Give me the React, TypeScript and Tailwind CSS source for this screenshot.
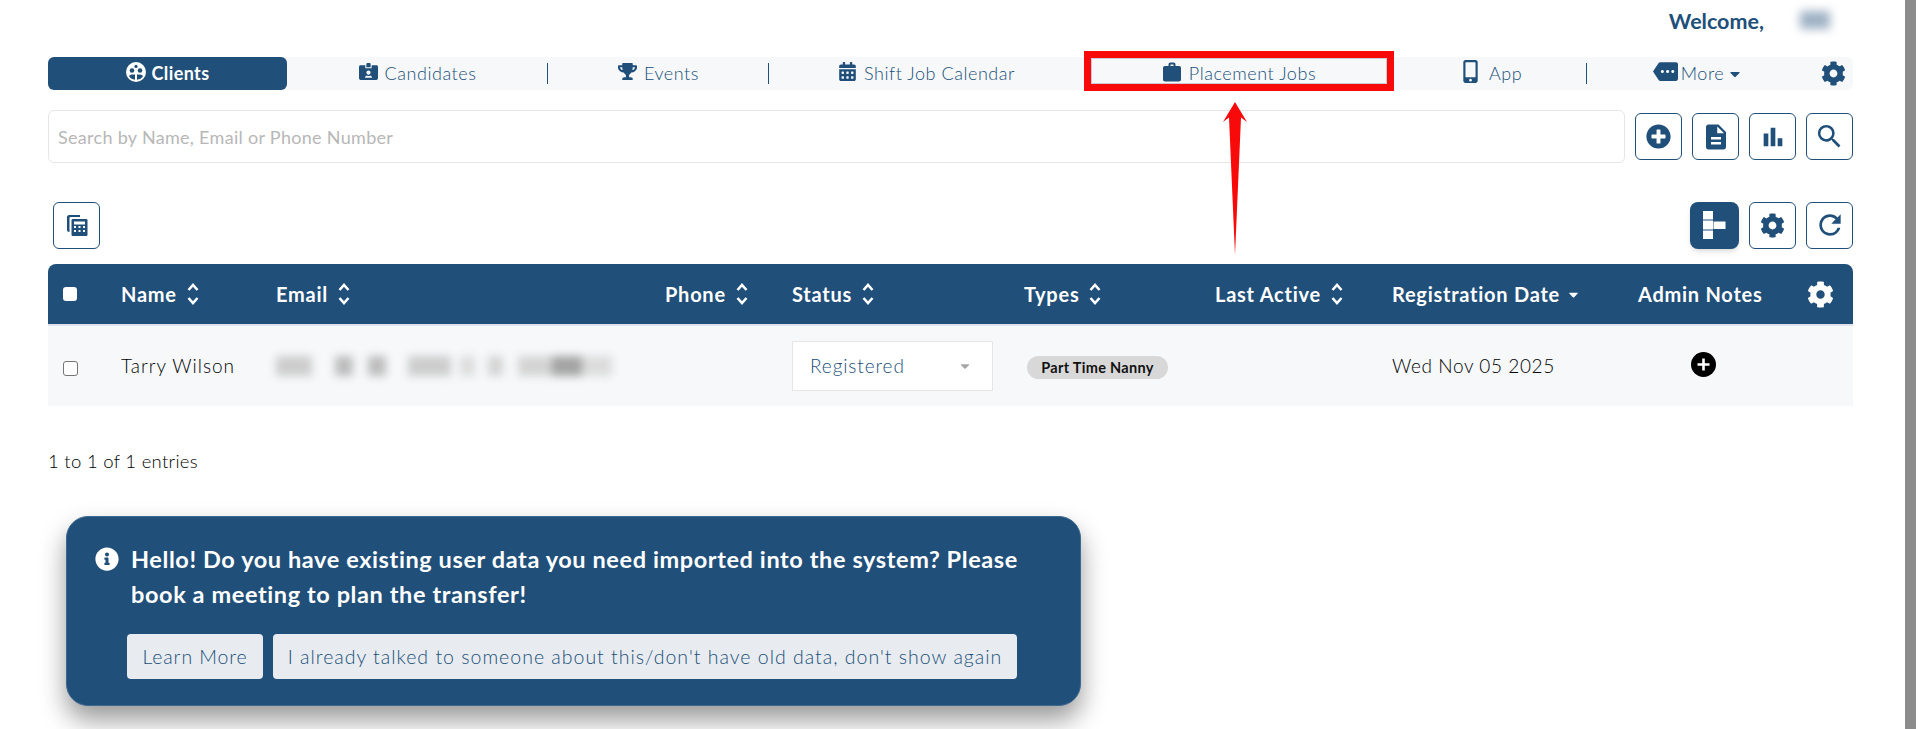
import { FaCalendarAlt, FaCaretDown, FaCog, FaIdCardAlt, FaInfoCircle, FaMobileAlt, FaPlusCircle, FaTrophy } from "react-icons/fa";
import { MdBarChart, MdDescription, MdMore, MdRefresh, MdSearch } from "react-icons/md";

const FONT = "font-['Lato','Noto_Sans',sans-serif]";

function ClientsIcon() {
  return (
    <svg width="20" height="20" viewBox="0 0 20 20" className="mb-1">
      <circle cx="10" cy="10" r="10" fill="#fff" />
      <circle cx="6" cy="8.500" r="2.300" fill="#204f79" />
      <circle cx="14" cy="8.500" r="2.300" fill="#204f79" />
      <circle cx="10" cy="4.400" r="1.600" fill="#204f79" />
      <path d="M9 12.500H6c-1.500 0-2.500.8-3 1.800 1.300 2 3.300 3.200 6 3.500zM11 12.500h3c1.500 0 2.500.8 3 1.800-1.300 2-3.300 3.200-6 3.500z" fill="#204f79" />
    </svg>
  );
}

function SuitcaseIcon() {
  return (
    <svg width="20" height="20" viewBox="0 0 20 20" fill="#204f79">
      <path fillRule="evenodd" d="M6.500 4V2.500C6.500 1.300 7.300.5 8.500.5h3c1.200 0 2 .8 2 2V4H17c1.200 0 2 .8 2 2v11.500c0 1.200-.8 2-2 2H3c-1.200 0-2-.8-2-2V6c0-1.200.8-2 2-2zm2-1.500V4h3V2.500z" />
    </svg>
  );
}

function CalcStackIcon() {
  return (
    <svg width="24" height="24" viewBox="0 0 24 24" fill="#204f79">
      <path d="M4 2h11v2H5.500C5 4 4.500 4.500 4.500 5v14H4c-1 0-2-1-2-2V4c0-1 1-2 2-2z" />
      <path fillRule="evenodd" d="M8 6h13c1 0 1.500.5 1.500 1.500v14c0 1-.5 1.500-1.500 1.500H8c-1 0-1.500-.5-1.500-1.500v-14C6.500 6.500 7 6 8 6zm1 2.500v3h11v-3zM9 13v2h2v-2zm4.500 0v2h2v-2zm4.500 0v2h2v-2zM9 17v2h2v-2zm4.500 0v2h2v-2zm4.500 0v2h2v-2z" />
    </svg>
  );
}

function TreeIcon() {
  return (
    <svg width="23" height="28" viewBox="0 0 23 28" fill="#fff">
      <rect x="0" y="0" width="10" height="8.500" />
      <rect x="0" y="9.500" width="10" height="9" />
      <rect x="0" y="19.500" width="10" height="8.500" />
      <rect x="10.500" y="10.500" width="12" height="7.500" />
    </svg>
  );
}

function SortIcon() {
  return (
    <svg width="14" height="24" viewBox="0 0 14 24" fill="none" stroke="#fff" strokeWidth="2.600" className="ml-[9px] shrink-0">
      <path d="M2.500 8 7 3l4.500 5M2.500 16 7 21l4.500-5" />
    </svg>
  );
}

function HeadLabel({ label, sort = true }: { label: string; sort?: boolean }) {
  return (
    <div className="flex items-center">
      <span>{label}</span>
      {sort && <SortIcon />}
    </div>
  );
}

function IconButton({ children, active = false }: { children: React.ReactNode; active?: boolean }) {
  return (
    <button
      className={
        active
          ? "flex h-[47px] w-[49px] items-center justify-center rounded-lg bg-[#204f79] shadow-md"
          : "flex h-[47px] w-[47px] items-center justify-center rounded-md border border-[#204f79] bg-white text-[#204f79]"
      }
    >
      {children}
    </button>
  );
}

function NavItem({ width, icon, label, divider = false }: { width: string; icon: React.ReactNode; label: string; divider?: boolean }) {
  return (
    <div className={`${width} relative flex h-full shrink-0 items-center justify-center gap-[7px] text-[18px] font-light tracking-[0.55px] text-[#204f79]`}>
      <span className="mb-1 text-[#204f79]">{icon}</span>
      <span>{label}</span>
      {divider && <span className="absolute top-[6px] right-0 h-[21px] w-[1.500px] bg-[#204f79]" />}
    </div>
  );
}

function EmailBlur() {
  return (
    <div className="flex h-[30px] items-center blur-[4px]">
      <span className="h-[20px] w-[36px] bg-[#cdcdcd]" />
      <span className="ml-[23px] h-[20px] w-[18px] bg-[#bdbdbd]" />
      <span className="ml-[15px] h-[20px] w-[18px] bg-[#bdbdbd]" />
      <span className="ml-[22px] h-[20px] w-[43px] bg-[#cdcdcd]" />
      <span className="ml-[9px] h-[20px] w-[15px] bg-[#dcdcdc]" />
      <span className="ml-[13px] h-[20px] w-[15px] bg-[#d4d4d4]" />
      <span className="ml-[15px] h-[20px] w-[34px] bg-[#d4d4d4]" />
      <span className="h-[20px] w-[30px] bg-[#a4a4a4]" />
      <span className="h-[20px] w-[30px] bg-[#dcdcdc]" />
    </div>
  );
}

export default function App() {
  return (
    <div className={`${FONT} relative h-[729px] w-full overflow-hidden bg-white`}>
      {/* scrollbar */}
      <div className="absolute top-0 right-[3px] bottom-0 w-[11px] bg-[#8c8c8c]" />

      <div className="pr-[66px] pl-[48px]">
        <div className="flex h-[57px] items-start justify-end pt-[5px] pr-[23px] text-[21.500px] font-bold text-[#204f79]">
          <span>Welcome,</span>
          <span className="mt-[6px] ml-[36px] h-[18px] w-[30px] bg-[#9fb2c5] blur-[5px]" />
        </div>

        <nav className="flex h-[33px] items-center rounded-md bg-[#f6f8fa]">
          <div className="flex h-full w-[239px] shrink-0 items-center justify-center gap-[6px] rounded-md bg-[#204f79] text-[18px] font-bold tracking-[0.4px] text-white">
            <ClientsIcon />
            <span>Clients</span>
          </div>
          <NavItem width="w-[261px]" icon={<FaIdCardAlt size={19} />} label="Candidates" divider />
          <NavItem width="w-[221px]" icon={<FaTrophy size={19} />} label="Events" divider />
          <NavItem width="w-[315px]" icon={<FaCalendarAlt size={19} />} label="Shift Job Calendar" />
          <NavItem width="w-[310px]" icon={<SuitcaseIcon />} label="Placement Jobs" />
          <NavItem width="w-[193px]" icon={<FaMobileAlt size={23} />} label="App" divider />
          <div className="flex h-full w-[222px] shrink-0 items-center justify-center text-[18px] font-light tracking-[0.55px] text-[#204f79]">
            <MdMore size={25} className="mb-1 text-[#204f79]" />
            <span className="ml-[3px]">More</span>
            <FaCaretDown size={16} className="ml-[3px] text-[#204f79]" />
          </div>
          <FaCog size={25} className="mr-[7px] mb-[1px] ml-auto text-[#204f79]" />
        </nav>

        <div className="mt-[20px] flex h-[53px] items-center gap-[10px]">
          <input
            placeholder="Search by Name, Email or Phone Number"
            className="h-full min-w-0 flex-1 rounded-md border border-[#e6e6e6] bg-white px-[9px] pt-[1px] text-[18px] tracking-[0.3px] placeholder:text-[#b7b7b7]"
          />
          <IconButton><FaPlusCircle size={25} /></IconButton>
          <IconButton><MdDescription size={30} /></IconButton>
          <IconButton><MdBarChart size={28} /></IconButton>
          <IconButton><MdSearch size={31} /></IconButton>
        </div>

        <div className="mt-[39px] flex h-[46px] items-center gap-[10px]">
          <div className="ml-[5px]"><IconButton><CalcStackIcon /></IconButton></div>
          <div className="ml-auto"><IconButton active><TreeIcon /></IconButton></div>
          <IconButton><FaCog size={25} /></IconButton>
          <IconButton><MdRefresh size={32} /></IconButton>
        </div>

        <div className="mt-[16px]">
          <div className="grid h-[62px] grid-cols-[73px_155px_389px_127px_232px_191px_177px_246px_167px_48px] items-center rounded-t-lg border-b-2 border-[#dfe3ee] bg-[#204f79] text-[20px] font-bold tracking-[0.75px] text-white">
            <span className="ml-[15px] h-[14px] w-[14px] rounded-[3px] bg-white" />
            <HeadLabel label="Name" />
            <HeadLabel label="Email" />
            <HeadLabel label="Phone" />
            <HeadLabel label="Status" />
            <HeadLabel label="Types" />
            <HeadLabel label="Last Active" />
            <div className="flex items-center">
              <span>Registration Date</span>
              <FaCaretDown size={15} className="ml-[6px]" />
            </div>
            <span>Admin Notes</span>
            <FaCog size={27} className="ml-[2px]" />
          </div>
          <div className="grid h-[80px] grid-cols-[73px_155px_389px_127px_232px_191px_177px_246px_215px] items-center bg-[#f6f8fa] text-[19px] font-light tracking-[0.6px] text-black">
            <span className="mt-[5px] ml-[15px] h-[15px] w-[15px] rounded-[3px] border border-[#767676] bg-white" />
            <span className="tracking-[1px]">Tarry Wilson</span>
            <EmailBlur />
            <span />
            <div className="flex h-[50px] w-[201px] items-center justify-between border border-[#e6e6e6] bg-white pr-[20px] pl-[17px] text-[#204f79]">
              <span className="tracking-[0.9px]">Registered</span>
              <FaCaretDown size={14} className="text-[#a5a5a5]" />
            </div>
            <div className="pl-[3px]">
              <span className="inline-flex h-[23px] w-[141px] items-center justify-center rounded-full bg-[#d8d8d8] text-[14.500px] font-bold tracking-[0.3px] text-[#111]">
                Part Time Nanny
              </span>
            </div>
            <span />
            <span>Wed Nov 05 2025</span>
            <div className="pl-[53px]">
              <svg width="25" height="25" viewBox="0 0 25 25" className="mb-1">
                <circle cx="12.500" cy="12.500" r="12.500" fill="#000" />
                <path d="M12.500 6.500v12M6.500 12.500h12" stroke="#fff" strokeWidth="2.600" />
              </svg>
            </div>
          </div>
        </div>

        <p className="mt-[43px] text-[18.500px] leading-[24px] font-light tracking-[0.3px] text-black">1 to 1 of 1 entries</p>
      </div>

      {/* floating notice */}
      <div className="absolute top-[516px] left-[66px] h-[190px] w-[1015px] rounded-[22px] border border-[#3d6890] bg-[#204f79] pt-[25px] pr-[40px] pl-[28px] shadow-[0_14px_26px_rgba(0,0,0,0.4)]">
        <div className="flex items-start gap-[12px]">
          <FaInfoCircle size={24} className="mt-[5px] shrink-0 text-white" />
          <p className="text-[23.500px] leading-[35px] font-bold tracking-[0.6px] text-white">
            Hello! Do you have existing user data you need imported into the system? Please book a meeting to plan the transfer!
          </p>
        </div>
        <div className="mt-[22px] ml-[32px] flex gap-[10px]">
          <button className="flex h-[45px] w-[136px] items-center justify-center rounded bg-[#e8ecf0] text-[19.500px] font-light tracking-[0.9px] text-[#204f79]">
            Learn More
          </button>
          <button className="flex h-[45px] w-[744px] items-center justify-center rounded bg-[#e8ecf0] text-[19.500px] font-light tracking-[1px] text-[#204f79]">
            I already talked to someone about this/don't have old data, don't show again
          </button>
        </div>
      </div>

      {/* annotation */}
      <div className="absolute top-[51px] left-[1084px] h-[40px] w-[310px] border-[7px] border-[#f80a0a]">
        <div className="h-full w-full border border-[#c9ccd6]" />
      </div>
      <svg width="26" height="154" viewBox="0 0 26 154" className="absolute top-[102px] left-[1222px]">
        <path d="M13 0 25 20 19 15.500 13 153 7 15.500 1 20z" fill="#f80a0a" />
      </svg>
    </div>
  );
}
